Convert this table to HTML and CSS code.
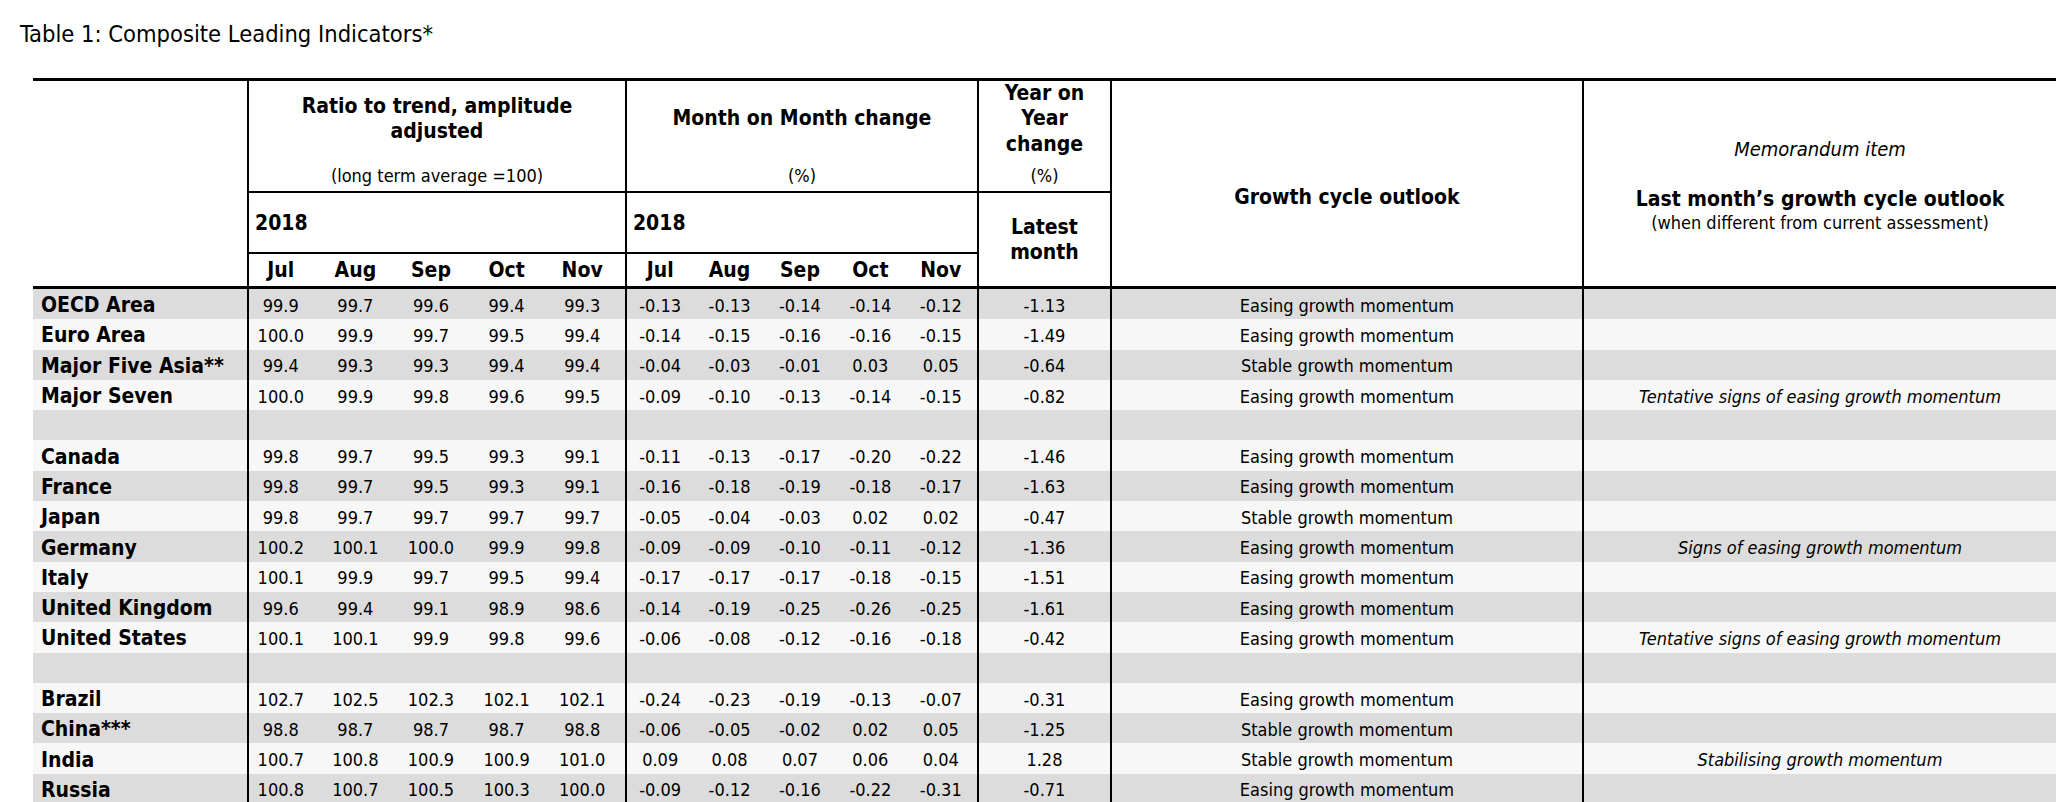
FILE: index.html
```html
<!DOCTYPE html>
<html lang="en">
<head>
<meta charset="utf-8">
<title>Table 1: Composite Leading Indicators*</title>
<link rel="stylesheet" href="styles.css">
</head>
<body>
<h1 class="title">Table 1: Composite Leading Indicators*</h1>
<table class="cli">
  <colgroup>
    <col class="c-label">
    <col class="c-ratio"><col class="c-ratio"><col class="c-ratio"><col class="c-ratio"><col class="c-ratio">
    <col class="c-mom"><col class="c-mom"><col class="c-mom"><col class="c-mom"><col class="c-mom">
    <col class="c-yoy">
    <col class="c-growth">
    <col class="c-memo">
  </colgroup>
  <thead>
    <tr class="hr-a">
      <th class="h-label" rowspan="3"></th>
      <th class="h-group vl" colspan="5"><div class="gtitle">Ratio to trend, amplitude<br>adjusted</div><div class="gsub">(long term average =100)</div></th>
      <th class="h-group vl" colspan="5"><div class="gtitle">Month on Month change</div><div class="gsub">(%)</div></th>
      <th class="h-group vl"><div class="gtitle">Year on<br>Year<br>change</div><div class="gsub">(%)</div></th>
      <th class="h-growth vl" rowspan="3">Growth cycle outlook</th>
      <th class="h-memo vl" rowspan="3"><div class="memo-kicker">Memorandum item</div><div class="memo-title">Last month’s growth cycle outlook</div><div class="memo-sub">(when different from current assessment)</div></th>
    </tr>
    <tr class="hr-b">
      <th class="h-year vl" colspan="5">2018</th>
      <th class="h-year vl" colspan="5">2018</th>
      <th class="h-latest vl" rowspan="2">Latest<br>month</th>
    </tr>
    <tr class="hr-c">
      <th class="r vl">Jul</th><th class="r">Aug</th><th class="r">Sep</th><th class="r">Oct</th><th class="r">Nov</th>
      <th class="m vl">Jul</th><th class="m">Aug</th><th class="m">Sep</th><th class="m">Oct</th><th class="m">Nov</th>
    </tr>
  </thead>
  <tbody>
    <tr><td class="lbl">OECD Area</td><td class="r vl">99.9</td><td class="r">99.7</td><td class="r">99.6</td><td class="r">99.4</td><td class="r">99.3</td><td class="m vl">-0.13</td><td class="m">-0.13</td><td class="m">-0.14</td><td class="m">-0.14</td><td class="m">-0.12</td><td class="vl">-1.13</td><td class="vl">Easing growth momentum</td><td class="vl memo-val"></td></tr>
    <tr><td class="lbl">Euro Area</td><td class="r vl">100.0</td><td class="r">99.9</td><td class="r">99.7</td><td class="r">99.5</td><td class="r">99.4</td><td class="m vl">-0.14</td><td class="m">-0.15</td><td class="m">-0.16</td><td class="m">-0.16</td><td class="m">-0.15</td><td class="vl">-1.49</td><td class="vl">Easing growth momentum</td><td class="vl memo-val"></td></tr>
    <tr><td class="lbl">Major Five Asia**</td><td class="r vl">99.4</td><td class="r">99.3</td><td class="r">99.3</td><td class="r">99.4</td><td class="r">99.4</td><td class="m vl">-0.04</td><td class="m">-0.03</td><td class="m">-0.01</td><td class="m">0.03</td><td class="m">0.05</td><td class="vl">-0.64</td><td class="vl">Stable growth momentum</td><td class="vl memo-val"></td></tr>
    <tr><td class="lbl">Major Seven</td><td class="r vl">100.0</td><td class="r">99.9</td><td class="r">99.8</td><td class="r">99.6</td><td class="r">99.5</td><td class="m vl">-0.09</td><td class="m">-0.10</td><td class="m">-0.13</td><td class="m">-0.14</td><td class="m">-0.15</td><td class="vl">-0.82</td><td class="vl">Easing growth momentum</td><td class="vl memo-val">Tentative signs of easing growth momentum</td></tr>
    <tr><td class="lbl"></td><td class="r vl"></td><td class="r"></td><td class="r"></td><td class="r"></td><td class="r"></td><td class="m vl"></td><td class="m"></td><td class="m"></td><td class="m"></td><td class="m"></td><td class="vl"></td><td class="vl"></td><td class="vl memo-val"></td></tr>
    <tr><td class="lbl">Canada</td><td class="r vl">99.8</td><td class="r">99.7</td><td class="r">99.5</td><td class="r">99.3</td><td class="r">99.1</td><td class="m vl">-0.11</td><td class="m">-0.13</td><td class="m">-0.17</td><td class="m">-0.20</td><td class="m">-0.22</td><td class="vl">-1.46</td><td class="vl">Easing growth momentum</td><td class="vl memo-val"></td></tr>
    <tr><td class="lbl">France</td><td class="r vl">99.8</td><td class="r">99.7</td><td class="r">99.5</td><td class="r">99.3</td><td class="r">99.1</td><td class="m vl">-0.16</td><td class="m">-0.18</td><td class="m">-0.19</td><td class="m">-0.18</td><td class="m">-0.17</td><td class="vl">-1.63</td><td class="vl">Easing growth momentum</td><td class="vl memo-val"></td></tr>
    <tr><td class="lbl">Japan</td><td class="r vl">99.8</td><td class="r">99.7</td><td class="r">99.7</td><td class="r">99.7</td><td class="r">99.7</td><td class="m vl">-0.05</td><td class="m">-0.04</td><td class="m">-0.03</td><td class="m">0.02</td><td class="m">0.02</td><td class="vl">-0.47</td><td class="vl">Stable growth momentum</td><td class="vl memo-val"></td></tr>
    <tr><td class="lbl">Germany</td><td class="r vl">100.2</td><td class="r">100.1</td><td class="r">100.0</td><td class="r">99.9</td><td class="r">99.8</td><td class="m vl">-0.09</td><td class="m">-0.09</td><td class="m">-0.10</td><td class="m">-0.11</td><td class="m">-0.12</td><td class="vl">-1.36</td><td class="vl">Easing growth momentum</td><td class="vl memo-val">Signs of easing growth momentum</td></tr>
    <tr><td class="lbl">Italy</td><td class="r vl">100.1</td><td class="r">99.9</td><td class="r">99.7</td><td class="r">99.5</td><td class="r">99.4</td><td class="m vl">-0.17</td><td class="m">-0.17</td><td class="m">-0.17</td><td class="m">-0.18</td><td class="m">-0.15</td><td class="vl">-1.51</td><td class="vl">Easing growth momentum</td><td class="vl memo-val"></td></tr>
    <tr><td class="lbl">United Kingdom</td><td class="r vl">99.6</td><td class="r">99.4</td><td class="r">99.1</td><td class="r">98.9</td><td class="r">98.6</td><td class="m vl">-0.14</td><td class="m">-0.19</td><td class="m">-0.25</td><td class="m">-0.26</td><td class="m">-0.25</td><td class="vl">-1.61</td><td class="vl">Easing growth momentum</td><td class="vl memo-val"></td></tr>
    <tr><td class="lbl">United States</td><td class="r vl">100.1</td><td class="r">100.1</td><td class="r">99.9</td><td class="r">99.8</td><td class="r">99.6</td><td class="m vl">-0.06</td><td class="m">-0.08</td><td class="m">-0.12</td><td class="m">-0.16</td><td class="m">-0.18</td><td class="vl">-0.42</td><td class="vl">Easing growth momentum</td><td class="vl memo-val">Tentative signs of easing growth momentum</td></tr>
    <tr><td class="lbl"></td><td class="r vl"></td><td class="r"></td><td class="r"></td><td class="r"></td><td class="r"></td><td class="m vl"></td><td class="m"></td><td class="m"></td><td class="m"></td><td class="m"></td><td class="vl"></td><td class="vl"></td><td class="vl memo-val"></td></tr>
    <tr><td class="lbl">Brazil</td><td class="r vl">102.7</td><td class="r">102.5</td><td class="r">102.3</td><td class="r">102.1</td><td class="r">102.1</td><td class="m vl">-0.24</td><td class="m">-0.23</td><td class="m">-0.19</td><td class="m">-0.13</td><td class="m">-0.07</td><td class="vl">-0.31</td><td class="vl">Easing growth momentum</td><td class="vl memo-val"></td></tr>
    <tr><td class="lbl">China***</td><td class="r vl">98.8</td><td class="r">98.7</td><td class="r">98.7</td><td class="r">98.7</td><td class="r">98.8</td><td class="m vl">-0.06</td><td class="m">-0.05</td><td class="m">-0.02</td><td class="m">0.02</td><td class="m">0.05</td><td class="vl">-1.25</td><td class="vl">Stable growth momentum</td><td class="vl memo-val"></td></tr>
    <tr><td class="lbl">India</td><td class="r vl">100.7</td><td class="r">100.8</td><td class="r">100.9</td><td class="r">100.9</td><td class="r">101.0</td><td class="m vl">0.09</td><td class="m">0.08</td><td class="m">0.07</td><td class="m">0.06</td><td class="m">0.04</td><td class="vl">1.28</td><td class="vl">Stable growth momentum</td><td class="vl memo-val">Stabilising growth momentum</td></tr>
    <tr><td class="lbl">Russia</td><td class="r vl">100.8</td><td class="r">100.7</td><td class="r">100.5</td><td class="r">100.3</td><td class="r">100.0</td><td class="m vl">-0.09</td><td class="m">-0.12</td><td class="m">-0.16</td><td class="m">-0.22</td><td class="m">-0.31</td><td class="vl">-0.71</td><td class="vl">Easing growth momentum</td><td class="vl memo-val"></td></tr>
  </tbody>
</table>
</body>
</html>
```
FILE: styles.css
```css
html, body {
  margin: 0;
  padding: 0;
  background: #ffffff;
}

body {
  font-family: "DejaVu Sans Condensed", "DejaVu Sans", sans-serif;
  font-stretch: condensed;
  font-size: 18px;
  color: #000000;
  width: 2064px;
}

.title {
  margin: 0;
  padding: 20px 0 0 20px;
  font-size: 23.5px;
  font-weight: normal;
  line-height: 28px;
}

.cli {
  margin: 30px 0 0 33px;
  width: 2023px;
  table-layout: fixed;
  border-collapse: separate;
  border-spacing: 0;
  border-top: 3px solid #000;
}

.c-label { width: 214px; }
.c-ratio { width: 75.6px; }
.c-mom { width: 70.4px; }
.c-yoy { width: 133px; }
.c-growth { width: 472px; }
.c-memo { width: 474px; }

th, td {
  padding: 0;
}

th {
  font-weight: bold;
  font-size: 21px;
}

.vl {
  border-left: 2px solid #000;
}

/* header row A */
.hr-a { height: 110px; }
.hr-a th { vertical-align: top; }

.gtitle {
  height: 76px;
  display: flex;
  align-items: center;
  justify-content: center;
  text-align: center;
  line-height: 25.5px;
}

.gsub {
  margin-top: 8px;
  line-height: 22px;
  font-size: 18px;
  font-weight: normal;
  text-align: center;
}

.h-growth {
  padding-top: 104px;
  line-height: 25px;
  text-align: center;
}

.h-memo {
  padding-top: 56px;
  text-align: center;
}

.memo-kicker {
  font-size: 20px;
  font-style: italic;
  font-weight: normal;
  line-height: 24px;
}

.memo-title {
  margin-top: 26px;
  line-height: 25px;
}

.memo-sub {
  font-size: 18px;
  font-weight: normal;
  line-height: 22px;
}

.h-label,
.h-growth,
.h-memo,
.h-latest,
.hr-c th {
  border-bottom: 3px solid #000;
}

/* header row B */
.hr-b { height: 61px; }
.hr-b th {
  border-top: 2px solid #000;
  vertical-align: middle;
}

.h-year {
  text-align: left;
  padding-left: 6px;
}

.h-latest {
  text-align: center;
  line-height: 25px;
}

/* header row C */
.hr-c { height: 37px; }
.hr-c th {
  border-top: 2px solid #000;
  text-align: center;
  vertical-align: middle;
}

.hr-c th.r,
tbody td.r {
  padding-right: 10px;
}

.hr-c th.m,
tbody td.m {
  padding-right: 2px;
}

/* body */
tbody tr {
  height: 30.3px;
  background: #f7f7f7;
}

tbody tr:nth-child(odd) {
  background: #dcdcdc;
}

tbody td {
  text-align: center;
  vertical-align: middle;
  padding-top: 2px;
  white-space: nowrap;
}

tbody td.lbl {
  text-align: left;
  padding-left: 8px;
  font-weight: bold;
  font-size: 21px;
}

tbody td.memo-val {
  font-style: italic;
}
```
